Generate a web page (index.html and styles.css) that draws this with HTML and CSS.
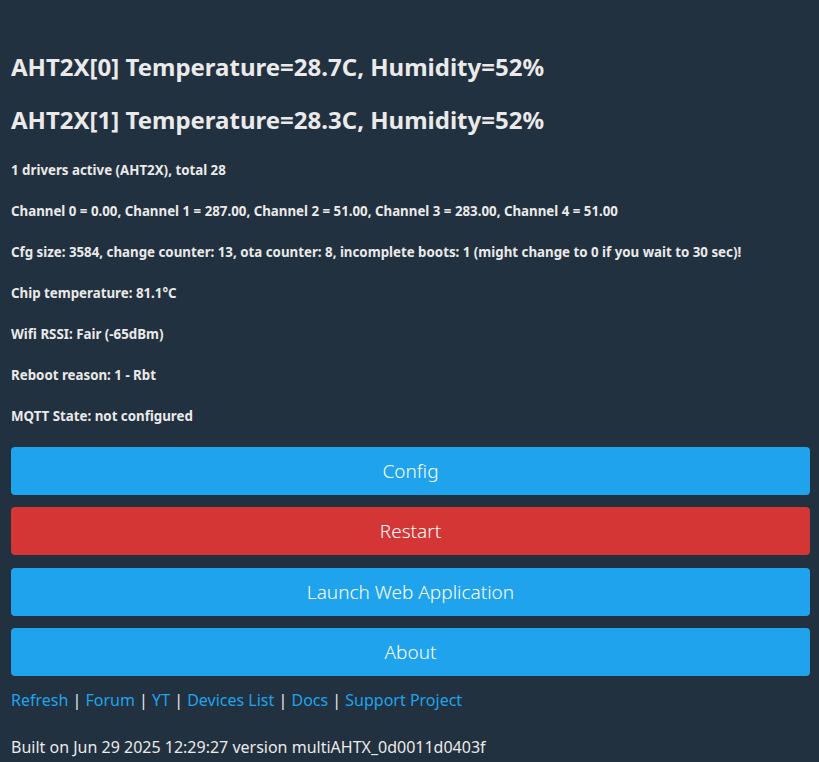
FILE: index.html
```html
<!DOCTYPE html>
<html>

<head>
    <link rel="stylesheet" href="styles.css">
</head>

<body>
    <div class="page">
        <h3 class="sensor">AHT2X[0] Temperature=28.7C, Humidity=52%</h3>
        <h3 class="sensor">AHT2X[1] Temperature=28.3C, Humidity=52%</h3>

        <h5 class="info first">1 drivers active (AHT2X), total 28</h5>
        <h5 class="info">Channel 0 = 0.00, Channel 1 = 287.00, Channel 2 = 51.00, Channel 3 = 283.00, Channel 4 = 51.00</h5>
        <h5 class="info">Cfg size: 3584, change counter: 13, ota counter: 8, incomplete boots: 1 (might change to 0 if you wait to 30 sec)!</h5>
        <h5 class="info">Chip temperature: 81.1°C</h5>
        <h5 class="info">Wifi RSSI: Fair (-65dBm)</h5>
        <h5 class="info">Reboot reason: 1 - Rbt</h5>
        <h5 class="info last">MQTT State: not configured</h5>

        <div class="buttons">
            <button class="btn">Config</button>
            <button class="btn btn-red">Restart</button>
            <button class="btn">Launch Web Application</button>
            <button class="btn">About</button>
        </div>

        <p class="links">
            <a href="#">Refresh</a> | <a href="#">Forum</a> | <a href="#">YT</a> | <a href="#">Devices List</a> | <a href="#">Docs</a> | <a href="#">Support Project</a>
        </p>

        <p class="built">Built on Jun 29 2025 12:29:27 version multiAHTX_0d0011d0403f</p>
    </div>
</body>

</html>
```

FILE: styles.css
```css
body {
    margin: 0;
    background-color: #22313f;
    color: #eaeaea;
    font-family: "Noto Sans", "Open Sans", sans-serif;
}

.page {
    padding: 51px 9px 0 11px;
}

.sensor {
    font-size: 24px;
    font-weight: bold;
    line-height: 32px;
    margin: 0 0 21px 0;
}

.info {
    font-size: 13.3px;
    font-weight: bold;
    line-height: 18px;
    margin: 0 0 23px 0;
}

.info.first {
    margin-top: 25px;
}

.info.last {
    margin-bottom: 22px;
}

.buttons {
    display: flex;
    flex-direction: column;
    gap: 12.3px;
}

.btn {
    height: 48px;
    width: 100%;
    border: none;
    border-radius: 4px;
    background-color: #1fa3ec;
    color: #ffffff;
    font-family: "Noto Sans", "Open Sans", sans-serif;
    font-size: 19px;
    font-weight: 300;
    padding: 0;
}

.btn-red {
    background-color: #d43535;
}

.links {
    font-size: 16px;
    line-height: 22px;
    margin: 13px 0 0 0;
}

.links a {
    color: #1fa3ec;
    text-decoration: none;
}

.built {
    font-size: 16px;
    line-height: 22px;
    margin: 25px 0 0 0;
}
```
